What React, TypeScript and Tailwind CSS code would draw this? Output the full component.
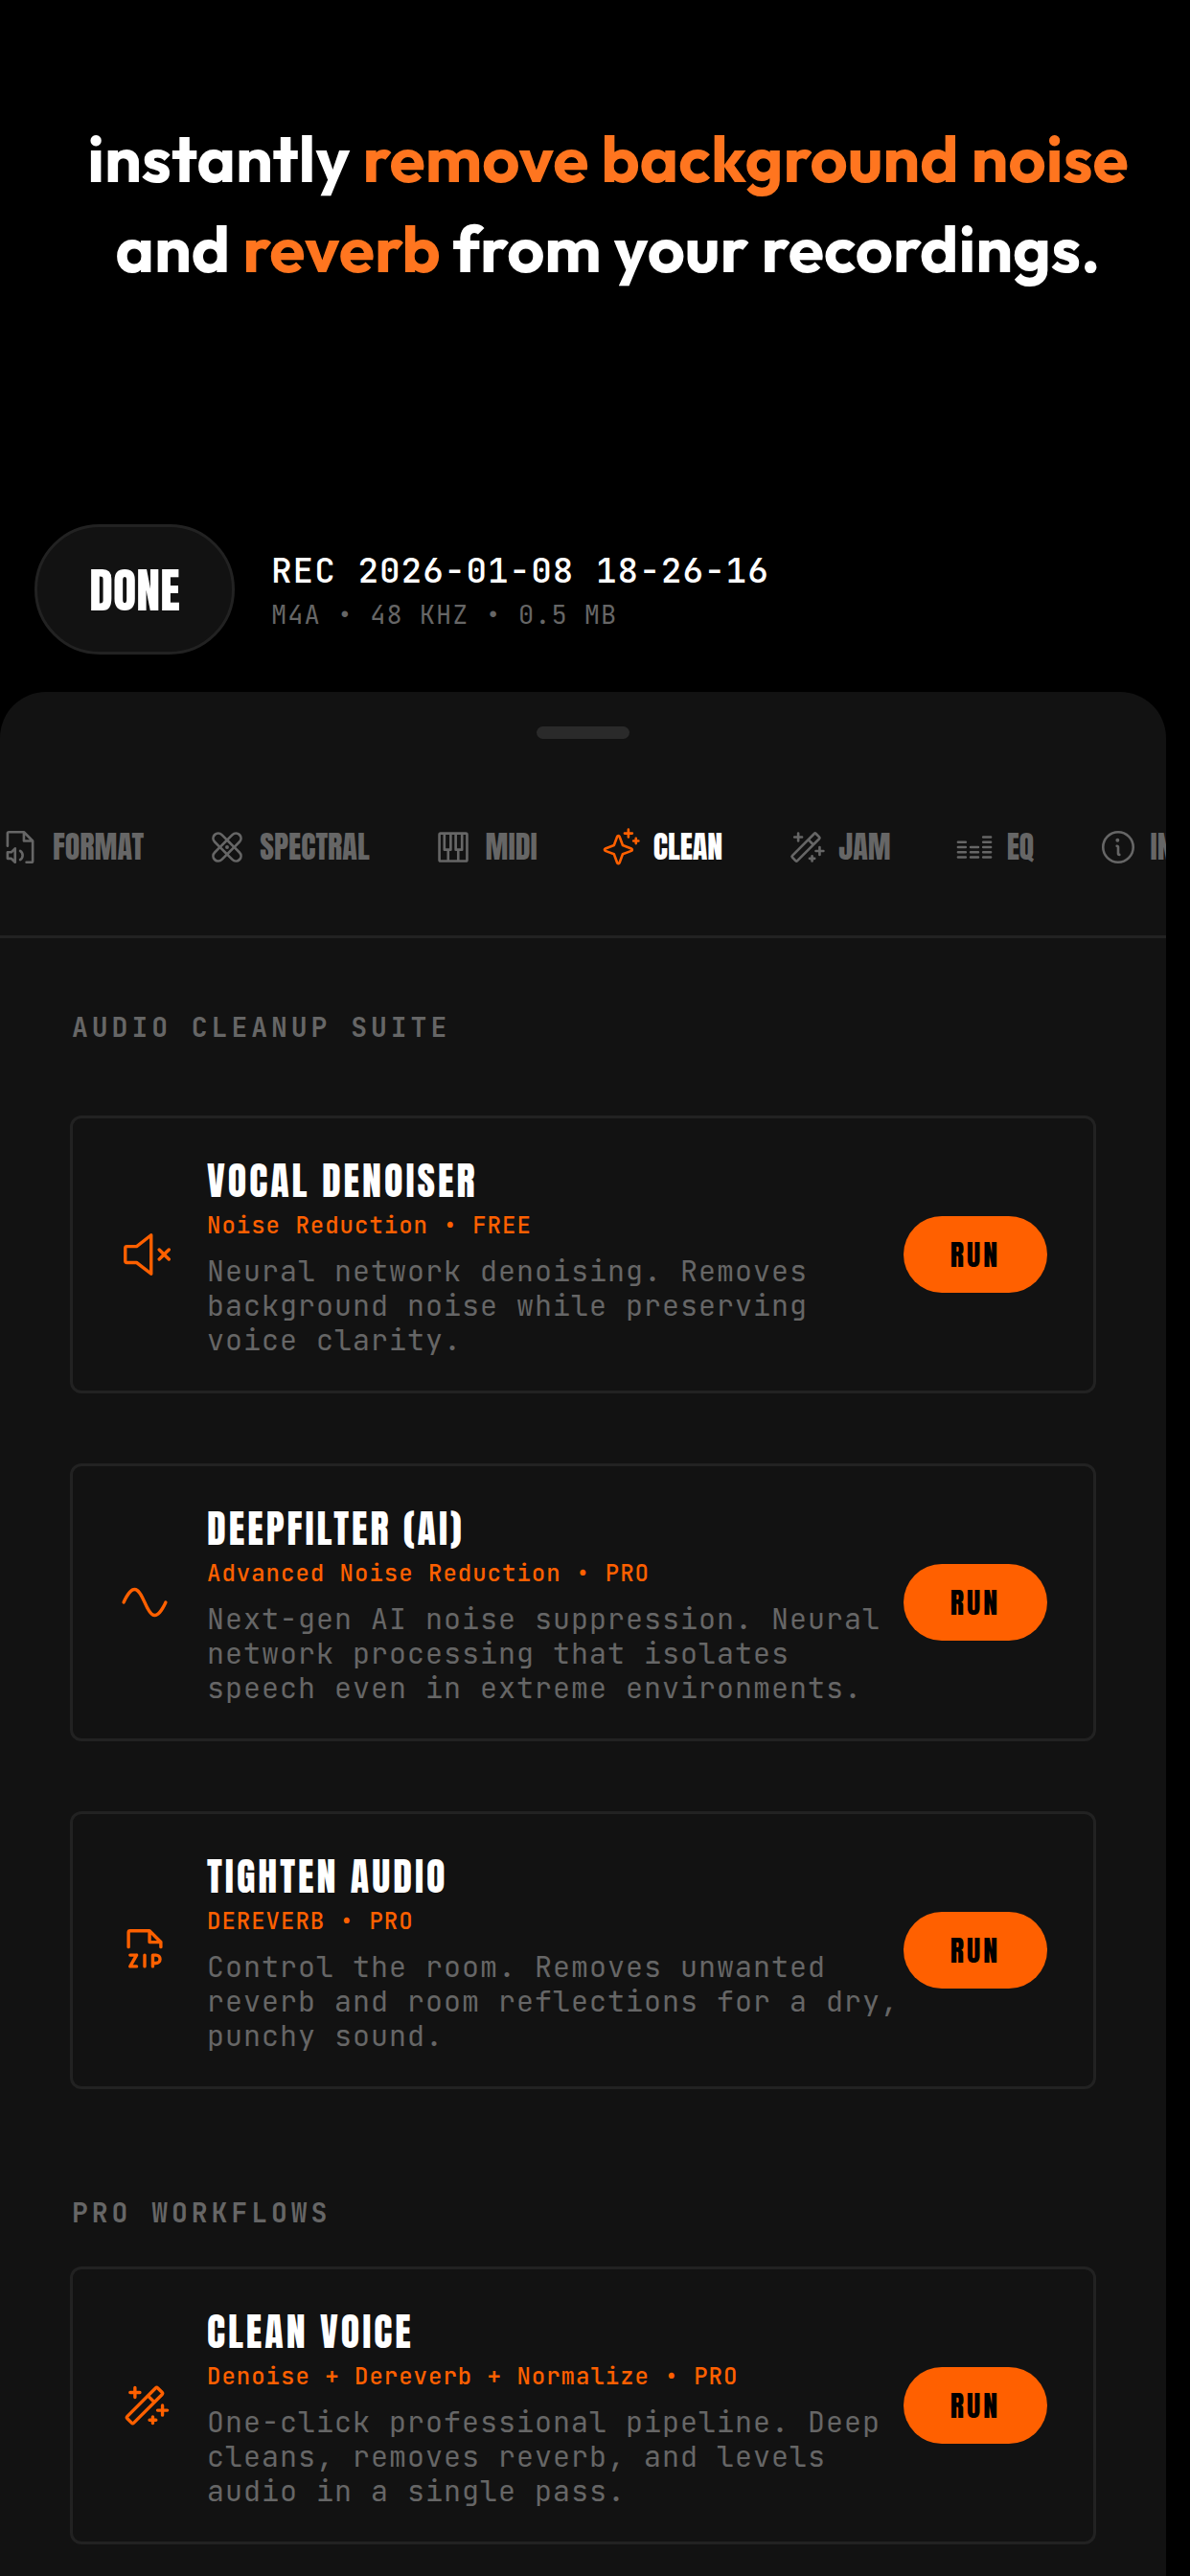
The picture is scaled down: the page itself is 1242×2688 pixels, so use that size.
import React, { useState } from 'react';
import type { IconType } from 'react-icons';
import {
  PiBandaids,
  PiEqualizer,
  PiFileAudio,
  PiFileZip,
  PiInfo,
  PiMagicWand,
  PiPianoKeys,
  PiSparkle,
  PiSpeakerSimpleX,
  PiWaveSine,
} from 'react-icons/pi';

interface Tab {
  icon: IconType;
  label: string;
}

interface Tool {
  icon: IconType;
  name: string;
  tagline: string;
  description: string;
}

const tabs: Tab[] = [
  { icon: PiFileAudio, label: 'FORMAT' },
  { icon: PiBandaids, label: 'SPECTRAL' },
  { icon: PiPianoKeys, label: 'MIDI' },
  { icon: PiSparkle, label: 'CLEAN' },
  { icon: PiMagicWand, label: 'JAM' },
  { icon: PiEqualizer, label: 'EQ' },
  { icon: PiInfo, label: 'INFO' },
];

const cleanupTools: Tool[] = [
  {
    icon: PiSpeakerSimpleX,
    name: 'VOCAL DENOISER',
    tagline: 'Noise Reduction • FREE',
    description: 'Neural network denoising. Removes background noise while preserving voice clarity.',
  },
  {
    icon: PiWaveSine,
    name: 'DEEPFILTER (AI)',
    tagline: 'Advanced Noise Reduction • PRO',
    description: 'Next-gen AI noise suppression. Neural network processing that isolates speech even in extreme environments.',
  },
  {
    icon: PiFileZip,
    name: 'TIGHTEN AUDIO',
    tagline: 'DEREVERB • PRO',
    description: 'Control the room. Removes unwanted reverb and room reflections for a dry, punchy sound.',
  },
];

const workflows: Tool[] = [
  {
    icon: PiMagicWand,
    name: 'CLEAN VOICE',
    tagline: 'Denoise + Dereverb + Normalize • PRO',
    description: 'One-click professional pipeline. Deep cleans, removes reverb, and levels audio in a single pass.',
  },
];

function SectionTitle({ children }: { children: React.ReactNode }) {
  return <h2 className="pl-0.5 text-[28px] leading-[42px] font-bold tracking-[4px] text-[#666666]">{children}</h2>;
}

function ToolCard({ tool }: { tool: Tool }) {
  const Icon = tool.icon;
  return (
    <article className="flex items-center rounded-xl border-3 border-[#222222] px-12 py-[35px]">
      <Icon className="size-[54px] shrink-0 text-[#ff6000]" />
      <div className="ml-[38px] min-w-0 flex-1">
        <h3 className="font-['Anton','Oswald','Roboto',sans-serif] text-[40px] leading-[60px] tracking-[3px] text-white">
          {tool.name}
        </h3>
        <p className="text-[24px] leading-[34px] font-medium tracking-[1px] text-[#ff6000]">{tool.tagline}</p>
        <p className="mt-3 text-[30px] leading-[36px] tracking-[1px] text-[#666666]">{tool.description}</p>
      </div>
      <button
        type="button"
        aria-label={`RUN ${tool.name}`}
        className="h-20 w-[150px] shrink-0 cursor-pointer rounded-full bg-[#ff6000] font-['Anton','Oswald','Roboto',sans-serif] text-[30px] tracking-[3px] text-black"
      >
        RUN
      </button>
    </article>
  );
}

export default function App() {
  const [activeTab, setActiveTab] = useState('CLEAN');

  return (
    <div className="flex min-h-screen flex-col overflow-hidden bg-black font-['JetBrains_Mono','Liberation_Mono',monospace]">
      <h1 className="pt-[118px] pl-[27px] text-center font-['Outfit','Urbanist','Inter',sans-serif] text-[68px] leading-[94px] font-bold text-white">
        instantly <span className="text-[#ff751f]">remove background noise</span>
        <br />
        and <span className="text-[#ff751f]">reverb</span> from your recordings.
      </h1>

      {/* Recording header */}
      <header className="mt-[241px] flex items-center gap-[38px] pl-9">
        <button
          type="button"
          className="h-[136px] w-[209px] shrink-0 cursor-pointer rounded-full border-3 border-[#222222] bg-[#121212] font-['Anton','Oswald','Roboto',sans-serif] text-[50px] text-white"
        >
          DONE
        </button>
        <div>
          <p className="text-[36px] leading-[52px] font-medium tracking-[1px] text-white">REC 2026-01-08 18-26-16</p>
          <p className="text-[27px] leading-10 tracking-[1px] text-[#666666]">M4A • 48 KHZ • 0.5 MB</p>
        </div>
      </header>

      {/* Bottom sheet */}
      <main className="mt-[39px] mr-[25px] flex-1 overflow-hidden rounded-t-[48px] bg-[#121212] pt-9">
        <div className="mx-auto mb-[21px] h-[13px] w-[97px] rounded-full bg-[#2a2a2a]" />

        <nav className="flex gap-[66px] overflow-hidden border-b-3 border-[#222222] py-[68px]">
          {tabs.map(({ icon: Icon, label }) => {
            const active = label === activeTab;
            return (
              <button
                key={label}
                type="button"
                onClick={() => setActiveTab(label)}
                className={`flex shrink-0 cursor-pointer items-center gap-[13px] font-['Anton','Oswald','Roboto',sans-serif] text-[32px] leading-[48px] ${
                  active ? 'text-white' : 'text-[#666666]'
                }`}
              >
                <Icon className={active ? 'size-[42px] text-[#ff6000]' : 'size-[42px]'} />
                {label}
              </button>
            );
          })}
        </nav>

        <div className="px-[73px] pt-[72px] pb-8">
          <SectionTitle>AUDIO CLEANUP SUITE</SectionTitle>
          <div className="mt-[71px] flex flex-col gap-[73px]">
            {cleanupTools.map((tool) => (
              <ToolCard key={tool.name} tool={tool} />
            ))}
          </div>

          <div className="mt-[108px]">
            <SectionTitle>PRO WORKFLOWS</SectionTitle>
          </div>
          <div className="mt-[35px] flex flex-col gap-[73px]">
            {workflows.map((tool) => (
              <ToolCard key={tool.name} tool={tool} />
            ))}
          </div>
        </div>
      </main>
    </div>
  );
}
